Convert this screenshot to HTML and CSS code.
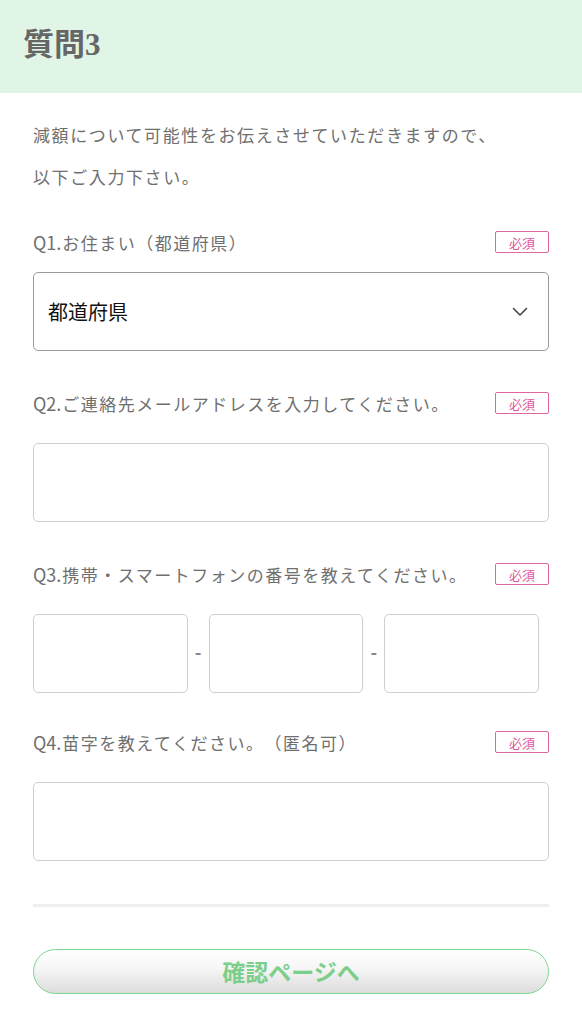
FILE: index.html
```html
<!DOCTYPE html>
<html lang="ja">
<head>
<meta charset="utf-8">
<link rel="stylesheet" href="styles.css">
</head>
<body>
<header class="head"><h1 class="title">質問3</h1></header>
<main class="main">
  <p class="intro">減額について可能性をお伝えさせていただきますので、<br>以下ご入力下さい。</p>

  <section class="field f1">
    <div class="qrow"><span class="q"><span class="qn">Q1.</span>お住まい（都道府県）</span><span class="badge">必須</span></div>
    <div class="select"><span>都道府県</span>
      <svg class="chev" width="16" height="10" viewBox="0 0 16 10"><path d="M1.5 1.5 L8 8 L14.5 1.5" fill="none" stroke="#444" stroke-width="1.6" stroke-linecap="round" stroke-linejoin="round"/></svg>
    </div>
  </section>

  <section class="field">
    <div class="qrow"><span class="q"><span class="qn">Q2.</span>ご連絡先メールアドレスを入力してください。</span><span class="badge">必須</span></div>
    <div class="box"></div>
  </section>

  <section class="field">
    <div class="qrow"><span class="q"><span class="qn">Q3.</span>携帯・スマートフォンの番号を教えてください。</span><span class="badge">必須</span></div>
    <div class="phone">
      <div class="box pbox"></div><span class="dash">-</span>
      <div class="box pbox"></div><span class="dash">-</span>
      <div class="box pbox"></div>
    </div>
  </section>

  <section class="field f4">
    <div class="qrow"><span class="q"><span class="qn">Q4.</span>苗字を教えてください。（匿名可）</span><span class="badge">必須</span></div>
    <div class="box"></div>
  </section>

  <hr class="divider">
  <button class="btn">確認ページへ</button>
</main>
</body>
</html>
```
FILE: styles.css
```css
* { box-sizing: border-box; }
body {
  margin: 0;
  background: #fff;
  font-family: "Noto Sans CJK JP", "Noto Sans", sans-serif;
  color: #6f6f6f;
  text-spacing-trim: space-all;
}
.head {
  background: #e0f5e6;
  height: 93px;
  display: flex;
  align-items: center;
  padding-left: 23px;
}
.title {
  margin: 0 0 10px;
  font-family: "Liberation Serif", "Noto Sans CJK JP", serif;
  font-size: 31px;
  font-weight: 700;
  color: #666;
  letter-spacing: 0;
}
.main { padding: 0 33px; }
.intro {
  margin: 21px 0 0;
  font-size: 17px;
  line-height: 42px;
  letter-spacing: 1.6px;
}
.field { margin-top: 41px; }
.f1 { margin-top: 33px; }
.f4 { margin-top: 38px; }
.qrow {
  display: flex;
  justify-content: space-between;
  align-items: center;
  height: 22px;
  margin-bottom: 29px;
}
.f1 .qrow { margin-bottom: 19px; }
.q { font-size: 17px; letter-spacing: 1.5px; white-space: nowrap; }
.qn { font-size: 18px; letter-spacing: 0; margin-right: 1px; }
.badge {
  width: 54px;
  height: 22px;
  border: 1.5px solid #e066a0;
  border-radius: 2px;
  color: #e0559a;
  font-size: 13px;
  letter-spacing: 0;
  display: flex;
  align-items: center;
  justify-content: center;
  flex: none;
}
.select {
  height: 79px;
  border: 1.5px solid #9a9a9a;
  border-radius: 5px;
  display: flex;
  align-items: center;
  justify-content: space-between;
  padding: 0 20px 0 14px;
  font-size: 20px;
  color: #111;
}
.box {
  height: 79px;
  border: 1.5px solid #cfcfcf;
  border-radius: 5px;
}
.phone { display: flex; align-items: center; width: 506px; }
.pbox { width: 155px; }
.dash { width: 21px; text-align: center; font-size: 18px; font-weight: 700; color: #888; margin-top: -6px; }
.divider {
  margin: 43px 0 0;
  border: 0;
  height: 3px;
  background: #eeeeee;
}
.btn {
  display: block;
  width: 100%;
  margin-top: 42px;
  height: 45px;
  border: 1.5px solid #7dd694;
  border-radius: 23px;
  background: linear-gradient(#ffffff, #f5f5f5 45%, #dcdcdc);
  color: #7ccf8a;
  font-family: "Noto Sans CJK JP", sans-serif;
  font-size: 23px;
  font-weight: 700;
  padding: 0;
  line-height: 1;
}
```
